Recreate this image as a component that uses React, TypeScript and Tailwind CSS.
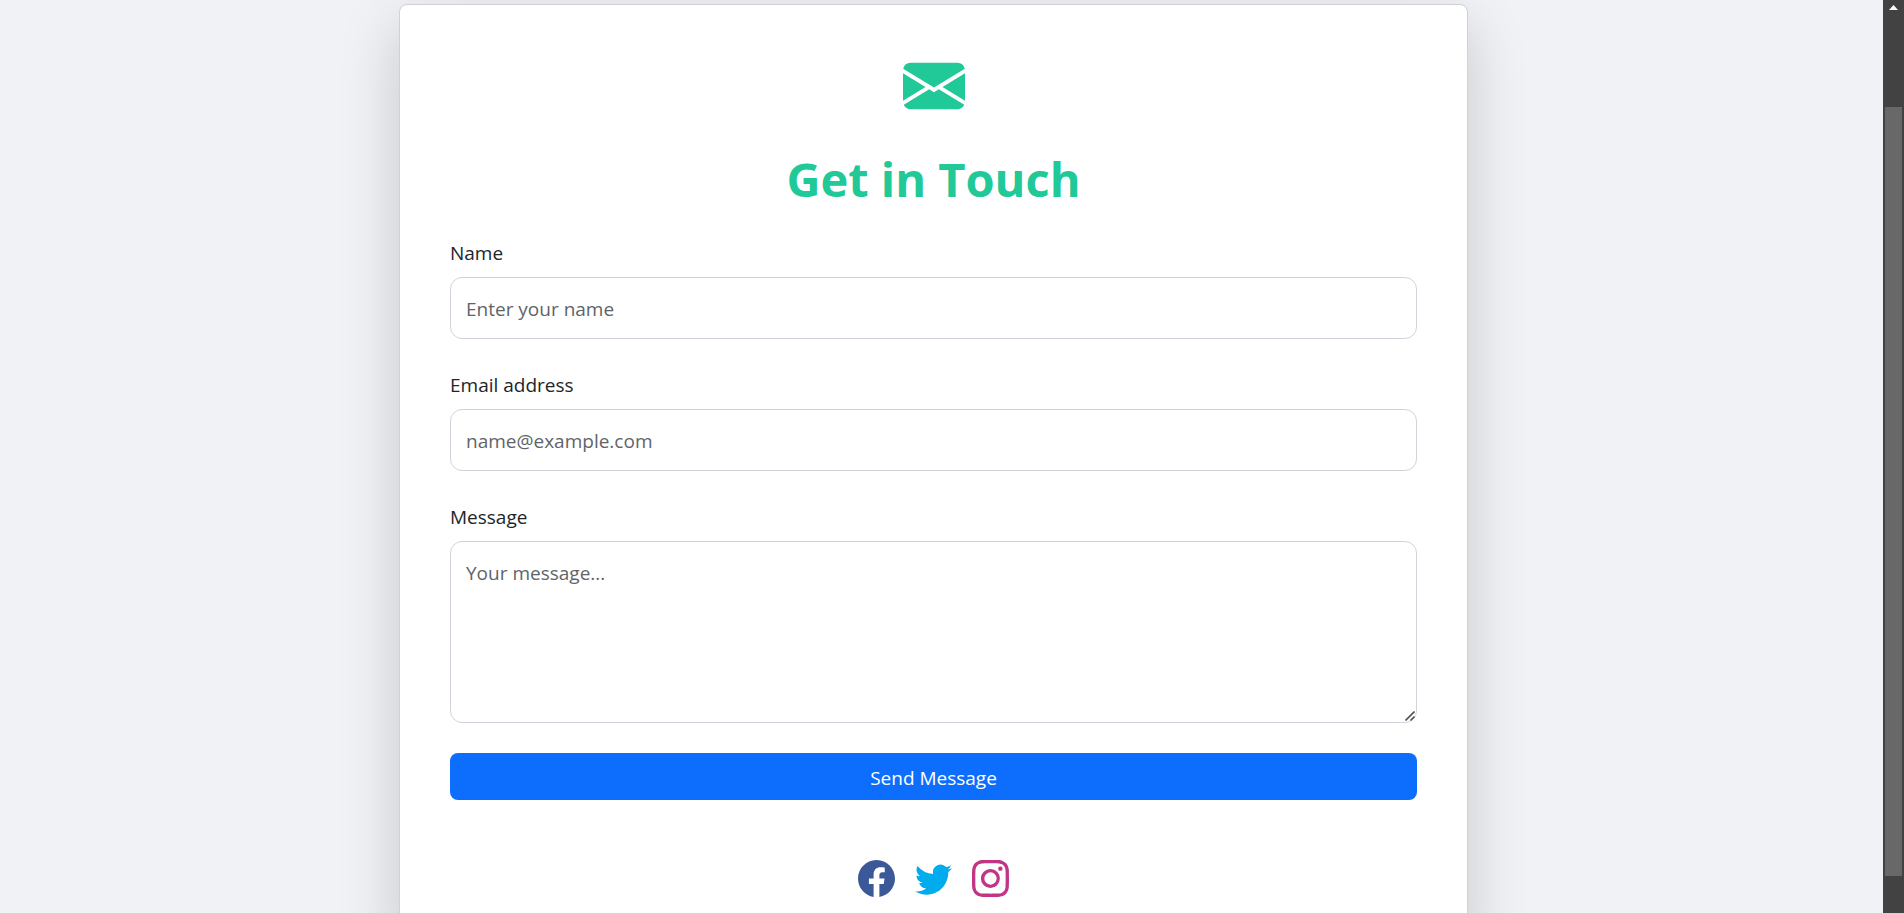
import { BsEnvelopeFill, BsFacebook, BsInstagram, BsTwitter } from "react-icons/bs";

const labelClass = "block pb-2 text-[19px] leading-8 text-[#212529]";
const fieldClass =
  "block w-full rounded-xl border border-[#ced4da] bg-white px-[15px] pt-4 pb-3.5 text-[19px] leading-[30px] text-[#212529] placeholder:text-[#5f6469] placeholder:opacity-100";

function ScrollRail() {
  return (
    <div aria-hidden="true" className="flex w-[21px] shrink-0 flex-col items-center bg-[#424242]">
      <svg viewBox="0 0 9 5" className="mt-[5px] h-[5px] w-[9px] shrink-0" fill="#ffffff">
        <path d="M4.5 0 9 5H0z" />
      </svg>
      <div className="mt-[97px] mb-[37px] w-[17px] flex-1 bg-[#686868]" />
    </div>
  );
}

export default function App() {
  return (
    <div className="flex h-screen overflow-hidden bg-[#f0f2f5] font-['Open_Sans','Noto_Sans',sans-serif]">
      <main className="min-w-0 flex-1 overflow-hidden pt-1 pr-4">
        <section className="mx-auto w-full max-w-[1069px] rounded-lg border border-[#cfd1d2] bg-white p-[50px] shadow-[0_20px_60px_rgba(0,0,0,0.175)]">
          <BsEnvelopeFill className="mx-auto size-[62px] text-[#20c997]" />
          <h1 className="mt-8 mb-7 text-center text-[47px] leading-[60px] font-bold text-[#20c997]">
            Get in Touch
          </h1>
          <form className="flex flex-col gap-[30px]" onSubmit={(e) => e.preventDefault()}>
            <div>
              <label htmlFor="name" className={labelClass}>Name</label>
              <input id="name" type="text" placeholder="Enter your name" className={fieldClass} />
            </div>
            <div>
              <label htmlFor="email" className={labelClass}>Email address</label>
              <input id="email" type="email" placeholder="name@example.com" className={fieldClass} />
            </div>
            <div>
              <label htmlFor="message" className={labelClass}>Message</label>
              <div className="relative">
                <textarea
                  id="message"
                  rows={5}
                  placeholder="Your message..."
                  className={`${fieldClass} resize-none`}
                />
                <svg
                  aria-hidden="true"
                  viewBox="0 0 10 10"
                  className="pointer-events-none absolute right-0.5 bottom-0.5 size-2.5"
                  stroke="#555555"
                  strokeWidth="1.6"
                  fill="none"
                >
                  <path d="M0.5 9.5 9.5 0.5M5.5 9.5 9.5 5.5" />
                </svg>
              </div>
            </div>
            <button
              type="submit"
              className="w-full rounded-lg bg-[#0d6efd] pt-2.5 pb-1.5 text-[19px] leading-[31px] text-white"
            >
              Send Message
            </button>
          </form>
          <nav className="mt-[60px] flex justify-center gap-5">
            <a href="#facebook" aria-label="Facebook" className="text-[#3b5998]">
              <BsFacebook className="size-[37px]" />
            </a>
            <a href="#twitter" aria-label="Twitter" className="text-[#00acee]">
              <BsTwitter className="size-[37px]" />
            </a>
            <a href="#instagram" aria-label="Instagram" className="text-[#c13584]">
              <BsInstagram className="size-[37px]" />
            </a>
          </nav>
        </section>
      </main>
      <ScrollRail />
    </div>
  );
}
